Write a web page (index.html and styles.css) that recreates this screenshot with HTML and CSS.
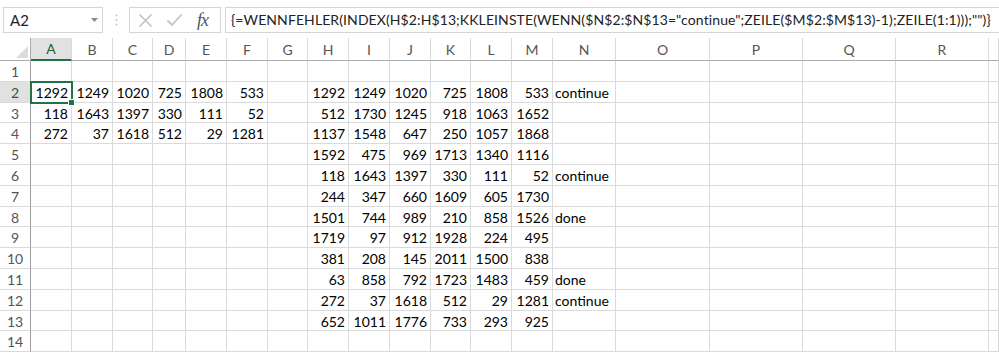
FILE: index.html
```html
<!DOCTYPE html>
<html lang="de">
<head>
  <meta charset="UTF-8">
  <title>Mappe1 - Excel</title>
  <link rel="stylesheet" href="styles.css">
</head>
<body>
  <div class="formula-bar">
    <div class="name-box">
      <span>A2</span>
      <svg class="caret" width="7" height="4" viewBox="0 0 7 4"><path d="M0 0h7L3.5 4z" fill="#8a8a8a"/></svg>
    </div>
    <svg class="grip" width="3" height="12" viewBox="0 0 3 12">
      <circle cx="1.5" cy="1.5" r="1" fill="#c4c4c4"/>
      <circle cx="1.5" cy="6" r="1" fill="#c4c4c4"/>
      <circle cx="1.5" cy="10.5" r="1" fill="#c4c4c4"/>
    </svg>
    <div class="fx-buttons">
      <svg width="15" height="15" viewBox="0 0 15 15"><path d="M1.5 1.5l12 12M13.5 1.5l-12 12" stroke="#c2c2c2" stroke-width="1.6" fill="none"/></svg>
      <svg width="17" height="14" viewBox="0 0 17 14"><path d="M1.5 7.5l4.5 4.5L15.5 1.5" stroke="#c2c2c2" stroke-width="1.8" fill="none"/></svg>
      <span class="fx">fx</span>
    </div>
    <div class="formula">{=WENNFEHLER(INDEX(H$2:H$13;KKLEINSTE(WENN($N$2:$N$13="continue";ZEILE($M$2:$M$13)-1);ZEILE(1:1)));"")}</div>
  </div>

  <div class="sheet" id="sheet"></div>

  <script>
    const spalten = ["A","B","C","D","E","F","G","H","I","J","K","L","M","N","O","P","Q","R",""];

    // Zeilen 2-13, Spalten A..N (leere Strings = leere Zelle)
    const daten = {
      2:  ["1292","1249","1020","725","1808","533","","1292","1249","1020","725","1808","533","continue"],
      3:  ["118","1643","1397","330","111","52","","512","1730","1245","918","1063","1652",""],
      4:  ["272","37","1618","512","29","1281","","1137","1548","647","250","1057","1868",""],
      5:  ["","","","","","","","1592","475","969","1713","1340","1116",""],
      6:  ["","","","","","","","118","1643","1397","330","111","52","continue"],
      7:  ["","","","","","","","244","347","660","1609","605","1730",""],
      8:  ["","","","","","","","1501","744","989","210","858","1526","done"],
      9:  ["","","","","","","","1719","97","912","1928","224","495",""],
      10: ["","","","","","","","381","208","145","2011","1500","838",""],
      11: ["","","","","","","","63","858","792","1723","1483","459","done"],
      12: ["","","","","","","","272","37","1618","512","29","1281","continue"],
      13: ["","","","","","","","652","1011","1776","733","293","925",""]
    };

    const sheet = document.getElementById("sheet");

    function zelle(klasse, text) {
      const div = document.createElement("div");
      div.className = klasse;
      div.textContent = text;
      sheet.appendChild(div);
      return div;
    }

    zelle("corner", "");
    spalten.forEach(s => zelle(s === "A" ? "col-head active" : "col-head", s));

    for (let r = 1; r <= 14; r++) {
      zelle(r === 2 ? "row-head active" : "row-head", r);
      const werte = daten[r] || [];
      spalten.forEach((s, i) => {
        const wert = werte[i] || "";
        let klasse = "cell";
        if (wert && isNaN(wert)) klasse += " text";
        if (r === 2 && i === 0) klasse += " selected";
        zelle(klasse, wert);
      });
    }
  </script>
</body>
</html>
```

FILE: styles.css
```css
body {
  margin: 0;
  width: 999px;
  height: 355px;
  overflow: hidden;
  background: #fff;
  font-family: Lato, "Open Sans", sans-serif;
  color: #000;
}

/* Bearbeitungsleiste */
.formula-bar {
  display: flex;
  align-items: center;
  height: 26px;
  padding-top: 7px;
  padding-left: 3px;
}
.name-box {
  box-sizing: border-box;
  width: 100px;
  height: 26px;
  border: 1px solid #d6d6d6;
  display: flex;
  align-items: center;
  justify-content: space-between;
  padding: 0 4px 0 6px;
  font-size: 15px;
  color: #222;
}
.grip {
  margin: 0 11px 0 12px;
}
.fx-buttons {
  box-sizing: border-box;
  width: 92px;
  height: 26px;
  border: 1px solid #d6d6d6;
  display: flex;
  align-items: center;
  gap: 13px;
  padding-left: 8px;
}
.fx {
  font-family: "Liberation Serif", serif;
  font-style: italic;
  font-size: 18px;
  color: #555;
  letter-spacing: -1px;
  margin-left: 1px;
}
.formula {
  box-sizing: border-box;
  flex: 1;
  height: 26px;
  margin-left: 4px;
  border: 1px solid #d6d6d6;
  border-right: none;
  padding-left: 5px;
  font-size: 14px;
  letter-spacing: 0.1px;
  line-height: 24px;
  color: #222;
  white-space: nowrap;
  overflow: hidden;
}

/* Tabellenblatt */
.sheet {
  display: grid;
  grid-template-columns: 31px 41px 41px 40px 33px 41px 41px 40px 41px 41px 41px 40px 41px 41px 63px 94px 93px 93px 93px 1fr;
  grid-template-rows: 23px repeat(14, 20.8px);
  margin-top: 5px;
}
.corner,
.col-head,
.row-head,
.cell {
  box-sizing: border-box;
  border-right: 1px solid #dadada;
  border-bottom: 1px solid #dadada;
  white-space: nowrap;
  overflow: hidden;
}
.corner {
  position: relative;
  border-bottom-color: #ababab;
  border-right-color: #ababab;
}
.corner::after {
  content: "";
  position: absolute;
  right: 2px;
  bottom: 2px;
  width: 12px;
  height: 12px;
  background: #dcdcdc;
  clip-path: polygon(100% 0, 100% 100%, 0 100%);
}
.col-head {
  border-bottom-color: #ababab;
  text-align: center;
  font-size: 14px;
  line-height: 23px;
  color: #555;
}
.row-head {
  border-right-color: #9e9e9e;
  text-align: center;
  font-size: 14px;
  line-height: 21px;
  color: #555;
}
.col-head.active {
  background: #e1e1e1;
  color: #2d5a3d;
  border-bottom: 2px solid #217346;
  line-height: 22px;
}
.row-head.active {
  background: #e1e1e1;
  color: #2d5a3d;
}
.cell {
  font-size: 14px;
  line-height: 20px;
  padding: 1px 3px 0 2px;
  text-align: right;
}
.cell.text {
  text-align: left;
  overflow: visible;
}
.cell.selected {
  position: relative;
  overflow: visible;
  outline: 2px solid #217346;
  outline-offset: -1px;
  z-index: 1;
}
.cell.selected::after {
  content: "";
  position: absolute;
  right: -4px;
  bottom: -4px;
  width: 5px;
  height: 5px;
  background: #217346;
  border: 1px solid #fff;
}
```
